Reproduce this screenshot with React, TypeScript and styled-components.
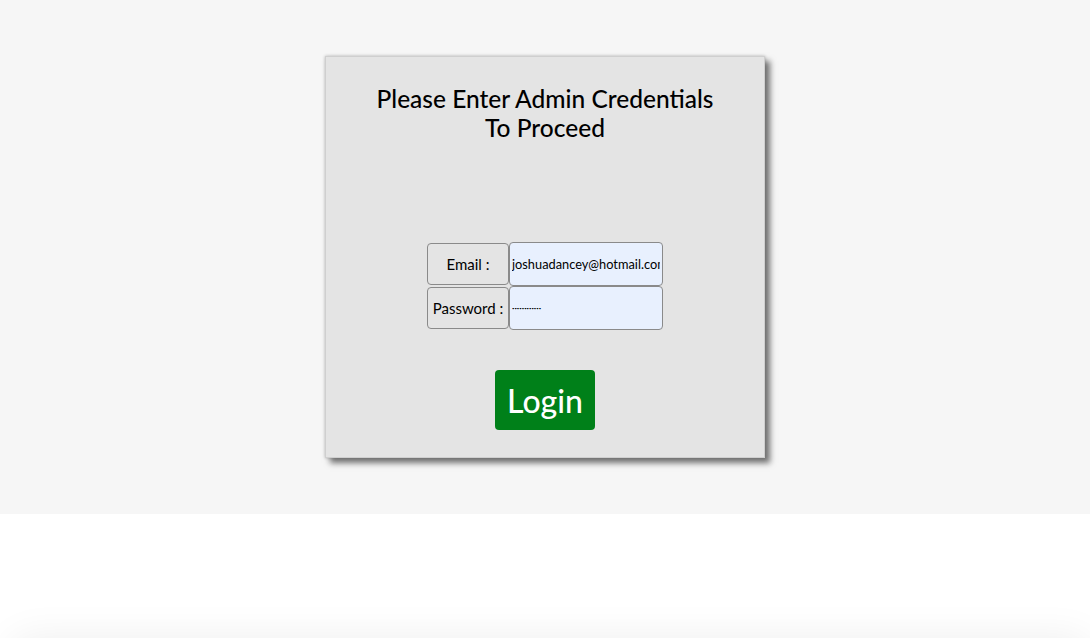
import React from "react";
import styled, { createGlobalStyle } from "styled-components";

const Global = createGlobalStyle`
  html, body { margin: 0; padding: 0; background: #ffffff; }
  body { font-family: Lato, "Noto Sans", sans-serif; color: #000; }
  * { box-sizing: border-box; }
`;

const Hero = styled.section`
  height: 514px;
  background: #f6f6f6;
  padding-top: 56px;
  display: flex;
  justify-content: center;
  align-items: flex-start;
`;

const Card = styled.div`
  width: 440px;
  height: 402px;
  background: #e4e4e4;
  border: 1px solid #cfcfcf;
  box-shadow: 5px 5px 6px #707070, 0 0 3px rgba(0, 0, 0, 0.25);
  display: flex;
  flex-direction: column;
  align-items: center;
  padding-top: 27px;
`;

const Title = styled.h2`
  margin: 0;
  font-family: Lato, "Noto Sans", sans-serif;
  font-weight: 500;
  font-size: 24.5px;
  line-height: 29px;
  text-align: center;
`;

const Form = styled.div`
  margin-top: 100px;
  display: grid;
  grid-template-columns: 82px 154px;
`;

const Label = styled.div`
  height: 42px;
  margin: 1px 0;
  background: #e4e4e4;
  border: 1px solid #8a8a8a;
  border-radius: 4px;
  display: flex;
  align-items: center;
  justify-content: center;
  font-size: 15px;
  white-space: nowrap;
`;

const Field = styled.input<{ $small?: boolean }>`
  height: 44px;
  width: 154px;
  margin: 0;
  background: #e8f0fe;
  border: 1px solid #8a8a8a;
  border-radius: 4px;
  padding: 0 2px;
  font-family: Lato, "Noto Sans", sans-serif;
  font-size: ${(p) => (p.$small ? "4.2px" : "12.8px")};
  color: #000;
  outline: none;
`;

const LoginButton = styled.button`
  margin-top: 40px;
  width: 100px;
  height: 60px;
  background: #008019;
  color: #ffffff;
  border: none;
  border-radius: 4px;
  font-family: Lato, "Noto Sans", sans-serif;
  font-size: 32px;
  font-weight: 500;
  cursor: pointer;
`;

const Lower = styled.section`
  height: 124px;
  background: #ffffff;
`;

const Footer = styled.footer`
  margin-left: 12px;
  height: 200px;
  background: #ffffff;
  border-radius: 16px;
  box-shadow: 0 0 40px rgba(0, 0, 0, 0.07);
`;

export default function App() {
  return (
    <>
      <Global />
      <Hero>
        <Card>
          <Title>
            Please Enter Admin Credentials
            <br />
            To Proceed
          </Title>
          <Form>
            <Label>Email :</Label>
            <Field type="email" readOnly defaultValue="joshuadancey@hotmail.com" />
            <Label>Password :</Label>
            <Field type="password" $small readOnly defaultValue="password1234" />
          </Form>
          <LoginButton>Login</LoginButton>
        </Card>
      </Hero>
      <Lower />
      <Footer />
    </>
  );
}
